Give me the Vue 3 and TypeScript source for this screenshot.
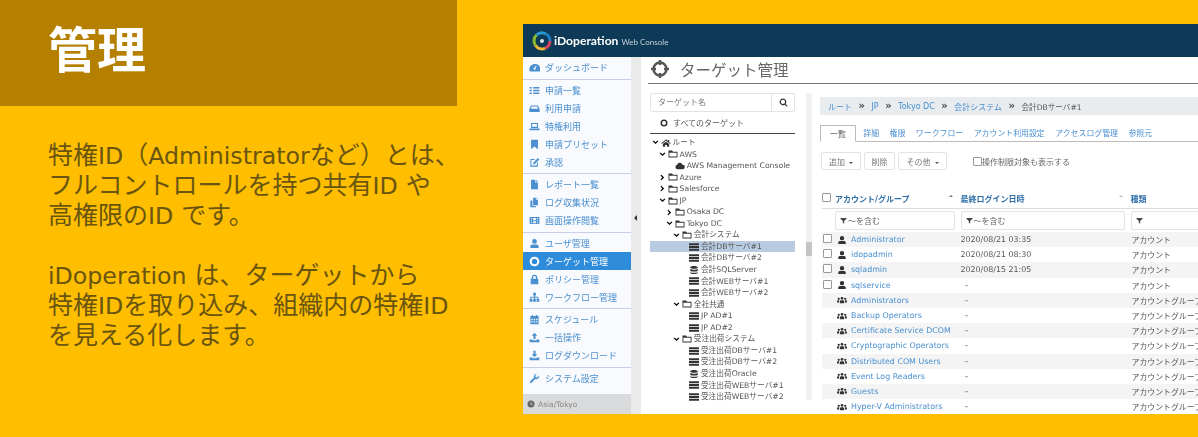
<script setup lang="ts">
const icons: Record<string, string> = {
  gauge: 'M8 3a7.500 7.500 0 0 0-7.500 7.500c0 1.300.3 2.400.8 3.200h14.400c.5-.8.8-1.900.8-3.200A7.500 7.500 0 0 0 8 3zm0 8.500a1.500 1.500 0 0 1-.6-2.900l2.600-3 .8.500-1.500 3.400A1.500 1.500 0 0 1 8 11.500z',
  list: 'M1 3h3v2H1zM6 3h9v2H6zM1 7h3v2H1zM6 7h9v2H6zM1 11h3v2H1zM6 11h9v2H6z',
  inbox: 'M3 3.500h10l2.500 5.500v4H.5V9zm1 1.500L2.800 8.500h10.400L12 5z',
  laptop: 'M3 3h10v7H3zm1.500 1.500v4h7v-4zM.5 11h15v1.500l-1 1h-13l-1-1z',
  bookmark: 'M3 1h10v14l-5-4-5 4z',
  edit: 'M2 3h7L7.500 4.500H3.500v8h8V9L13 7.500V14H2zM13 1.500l2 2L8.500 10 6 10.500 6.500 8z',
  file: 'M3 1h6v4h4v10H3zM10 1l3 3h-3zM5 7.500h6v1H5zM5 10h6v1H5z',
  copy: 'M6 1h4v3h3v8H6zM11 1l2 2h-2zM2 5h3v8h5v2H2z',
  film: 'M1 3h14v10H1zm2 1.500v1.500h1.500V4.500zm0 3V9h1.500V7.500zm0 3V12h1.500v-1.500zm8.500-6v1.500H13V4.500zm0 3V9H13V7.500zm0 3V12H13v-1.500zM6 4.500v3h4v-3zm0 4.500v3h4V9z',
  user: 'M8 1.500a3.500 3.500 0 1 1 0 7 3.500 3.500 0 0 1 0-7zM2 14.500v-2c0-2 1.500-3 3-3h6c1.500 0 3 1 3 3v2z',
  target: 'M8 1a7 7 0 1 1 0 14A7 7 0 0 1 8 1zm0 3a4 4 0 1 0 0 8 4 4 0 0 0 0-8z',
  lock: 'M4 7V5a4 4 0 0 1 8 0v2h1.500v8h-11V7zm2 0h4V5a2 2 0 0 0-4 0z',
  flow: 'M6 1h4v4H9v2h4.500v3h1.500v4h-4v-4h1V8.500H8.700V10H10v4H6v-4h1.300V8.500H3.500V10H5v4H1v-4h1V7h5.500V5H6z',
  calendar: 'M2 3h2V1.500h2V3h4V1.500h2V3h2v12H2zm1.500 4v2h2V7zm3.500 0v2h2V7zm3.500 0v2h2V7zM3.500 10.500v2h2v-2zm3.500 0v2h2v-2zm3.500 0v2h2v-2z',
  upload: 'M8 1l4 4.500H9.500V10h-3V5.500H4zM1 11h4v1h6v-1h4v4H1z',
  download: 'M6.500 1h3v5H12l-4 4.500L4 6h2.500zM1 11h4v1h6v-1h4v4H1z',
  wrench: 'M15 4.500a4.500 4.500 0 0 1-6 4.200L3.500 14.500a1.500 1.500 0 0 1-2-2l5.700-5.500A4.500 4.500 0 0 1 11.500 1L9 3.500 9.500 6l2.500.5L14.500 4z',
  clock: 'M8 1a7 7 0 1 1 0 14A7 7 0 0 1 8 1zM7.300 4v5l3.700 1.500.5-1.200-2.800-1.100V4z',
  home: 'M8 2l3 2.500V3h2v3.200L15.500 8.500l-.8.9L8 4 1.300 9.400l-.8-.9zM3 9.500L8 5.500l5 4V14H9.500v-3h-3v3H3z',
  folder: 'M.8 2.500h5.700l1.500 2h7.200v9H.8zM2.200 6v6h11.600V6z',
  server: 'M0 2h16v3.300H0zM0 6.400h16v3.300H0zM0 10.800h16v3.300H0z',
  db: 'M8 1.500c3.500 0 6 1 6 2.300S11.500 6 8 6 2 5.100 2 3.800 4.500 1.500 8 1.500zM2 6c1 1 3.500 1.500 6 1.500S13 7 14 6v3c-1 1-3.500 1.500-6 1.500S3 10 2 9zM2 11c1 1 3.500 1.500 6 1.500s5-.5 6-1.500v1.500c0 1.200-2.500 2-6 2s-6-.8-6-2z',
  cloud: 'M12.500 13H4a3.500 3.500 0 0 1-.6-6.900A4.500 4.500 0 0 1 12 6a3.500 3.500 0 0 1 .5 7z',
  search: 'M7 1a6 6 0 0 1 4.800 9.600l3.500 3.500-1.500 1.500-3.500-3.500A6 6 0 1 1 7 1zm0 2.200a3.800 3.800 0 1 0 0 7.600 3.800 3.800 0 0 0 0-7.600z',
  filter: 'M1 2h14v2L9.500 9v5.500h-3V9L1 4z',
  users: 'M8 3a2.300 2.300 0 1 1 0 4.600A2.300 2.300 0 0 1 8 3zM4.500 13v-2c0-1.500 1-2.500 2-2.500h3c1 0 2 1 2 2.500v2zM2.800 4.200a1.800 1.800 0 1 1 0 3.600 1.800 1.800 0 0 1 0-3.600zM13.200 4.200a1.800 1.800 0 1 1 0 3.600 1.800 1.800 0 0 1 0-3.600zM0 12v-1.800C0 9 .8 8.300 1.800 8.300h2C3.200 9 3.300 10 3.300 12zM16 12v-1.800c0-1.200-.8-1.900-1.800-1.900h-2c.6.700.5 1.700.5 3.700z',
  chevronDown: 'M1.500 5.200l2-2L8 7.700l4.500-4.500 2 2L8 11.700z',
  chevronRight: 'M5.200 1.500l6.500 6.500-6.500 6.500-2-2L7.700 8 3.200 3.500z',
}

type NavItem = { label: string; icon: string; active?: boolean }

const navGroups: NavItem[][] = [
  [{ label: 'ダッシュボード', icon: 'gauge' }],
  [
    { label: '申請一覧', icon: 'list' },
    { label: '利用申請', icon: 'inbox' },
    { label: '特権利用', icon: 'laptop' },
    { label: '申請プリセット', icon: 'bookmark' },
    { label: '承認', icon: 'edit' },
  ],
  [
    { label: 'レポート一覧', icon: 'file' },
    { label: 'ログ収集状況', icon: 'copy' },
    { label: '画面操作閲覧', icon: 'film' },
  ],
  [
    { label: 'ユーザ管理', icon: 'user' },
    { label: 'ターゲット管理', icon: 'target', active: true },
    { label: 'ポリシー管理', icon: 'lock' },
    { label: 'ワークフロー管理', icon: 'flow' },
  ],
  [
    { label: 'スケジュール', icon: 'calendar' },
    { label: '一括操作', icon: 'upload' },
    { label: 'ログダウンロード', icon: 'download' },
  ],
  [{ label: 'システム設定', icon: 'wrench' }],
]

type TreeNode = { label: string; level: number; icon: string; toggle?: 'open' | 'closed'; selected?: boolean }

const tree: TreeNode[] = [
  { label: 'ルート', level: 0, icon: 'home', toggle: 'open' },
  { label: 'AWS', level: 1, icon: 'folder', toggle: 'open' },
  { label: 'AWS Management Console', level: 2, icon: 'cloud' },
  { label: 'Azure', level: 1, icon: 'folder', toggle: 'closed' },
  { label: 'Salesforce', level: 1, icon: 'folder', toggle: 'closed' },
  { label: 'JP', level: 1, icon: 'folder', toggle: 'open' },
  { label: 'Osaka DC', level: 2, icon: 'folder', toggle: 'closed' },
  { label: 'Tokyo DC', level: 2, icon: 'folder', toggle: 'open' },
  { label: '会計システム', level: 3, icon: 'folder', toggle: 'open' },
  { label: '会計DBサーバ#1', level: 4, icon: 'server', selected: true },
  { label: '会計DBサーバ#2', level: 4, icon: 'server' },
  { label: '会計SQLServer', level: 4, icon: 'db' },
  { label: '会計WEBサーバ#1', level: 4, icon: 'server' },
  { label: '会計WEBサーバ#2', level: 4, icon: 'server' },
  { label: '全社共通', level: 3, icon: 'folder', toggle: 'open' },
  { label: 'JP AD#1', level: 4, icon: 'server' },
  { label: 'JP AD#2', level: 4, icon: 'server' },
  { label: '受注出荷システム', level: 3, icon: 'folder', toggle: 'open' },
  { label: '受注出荷DBサーバ#1', level: 4, icon: 'server' },
  { label: '受注出荷DBサーバ#2', level: 4, icon: 'server' },
  { label: '受注出荷Oracle', level: 4, icon: 'db' },
  { label: '受注出荷WEBサーバ#1', level: 4, icon: 'server' },
  { label: '受注出荷WEBサーバ#2', level: 4, icon: 'server' },
]

const crumbs = ['ルート', 'JP', 'Tokyo DC', '会計システム']
const tabs = ['詳細', '権限', 'ワークフロー', 'アカウント利用設定', 'アクセスログ管理', '参照元']

type Account = { name: string; login: string; kind: string; group?: boolean }

const accounts: Account[] = [
  { name: 'Administrator', login: '2020/08/21 03:35', kind: 'アカウント' },
  { name: 'idopadmin', login: '2020/08/21 08:30', kind: 'アカウント' },
  { name: 'sqladmin', login: '2020/08/15 21:05', kind: 'アカウント' },
  { name: 'sqlservice', login: '–', kind: 'アカウント' },
  { name: 'Administrators', login: '–', kind: 'アカウントグループ', group: true },
  { name: 'Backup Operators', login: '–', kind: 'アカウントグループ', group: true },
  { name: 'Certificate Service DCOM', login: '–', kind: 'アカウントグループ', group: true },
  { name: 'Cryptographic Operators', login: '–', kind: 'アカウントグループ', group: true },
  { name: 'Distributed COM Users', login: '–', kind: 'アカウントグループ', group: true },
  { name: 'Event Log Readers', login: '–', kind: 'アカウントグループ', group: true },
  { name: 'Guests', login: '–', kind: 'アカウントグループ', group: true },
  { name: 'Hyper-V Administrators', login: '–', kind: 'アカウントグループ', group: true },
]
</script>

<template>
  <div class="page">
    <section class="copy">
      <h1 class="title">管理</h1>
      <div class="body">
        <p>特権<span class="latin">ID</span>（<span class="latin">Administrator</span>など）とは、<br />フルコントロールを持つ共有<span class="latin">ID</span> や<br />高権限の<span class="latin">ID</span> です。</p>
        <p><span class="latin">iDoperation</span> は、ターゲットから<br />特権<span class="latin">ID</span>を取り込み、組織内の特権<span class="latin">ID</span><br />を見える化します。</p>
      </div>
    </section>

    <section class="shot">
      <header class="navbar">
        <svg class="logo" viewBox="0 0 20 20">
          <path d="M3.500 14.500A8 8 0 0 1 4.500 4" fill="none" stroke="#8dbb2f" stroke-width="3" />
          <path d="M4.500 4A8 8 0 0 1 14 3" fill="none" stroke="#2a9ad5" stroke-width="3" />
          <path d="M14 3A8 8 0 0 1 18 10" fill="none" stroke="#1c7fbf" stroke-width="3" />
          <path d="M18 10A8 8 0 0 1 13 17.400" fill="none" stroke="#d7405f" stroke-width="3" />
          <path d="M13 17.400A8 8 0 0 1 3.500 14.500" fill="none" stroke="#f2b830" stroke-width="3" />
          <circle cx="10" cy="10" r="2" fill="#dfe6ea" />
        </svg>
        <span class="brand">iDoperation</span>
        <span class="brand-sub">Web Console</span>
      </header>

      <div class="workspace">
        <aside class="sidebar">
          <div class="nav">
            <div v-for="(group, i) in navGroups" :key="i" class="nav-group">
              <div v-for="item in group" :key="item.label" class="nav-item" :class="{ active: item.active }">
                <svg class="nav-icon" viewBox="0 0 16 16"><path :d="icons[item.icon]" /></svg>
                <span>{{ item.label }}</span>
              </div>
            </div>
          </div>
          <div class="zone">
            <svg class="zone-icon" viewBox="0 0 16 16"><path :d="icons.clock" /></svg>
            <span>Asia/Tokyo</span>
          </div>
        </aside>

        <div class="gutter"><span class="gutter-arrow"></span></div>

        <main class="content">
          <div class="page-title">
            <svg class="title-icon" viewBox="0 0 20 20">
              <circle cx="10" cy="10" r="6.500" fill="none" stroke="#555" stroke-width="2.400" />
              <path d="M10 1v5M10 14v5M1 10h5M14 10h5" stroke="#555" stroke-width="2.400" />
            </svg>
            <span>ターゲット管理</span>
          </div>

          <div class="panes">
            <div class="tree-pane">
              <div class="search">
                <span class="search-text">ターゲット名</span>
                <span class="search-btn">
                  <svg viewBox="0 0 16 16"><path :d="icons.search" /></svg>
                </span>
              </div>
              <div class="all-targets">
                <svg class="all-icon" viewBox="0 0 16 16"><path :d="icons.target" /></svg>
                <span>すべてのターゲット</span>
              </div>
              <div class="tree">
                <div
                  v-for="node in tree"
                  :key="node.label"
                  class="tree-row"
                  :class="{ selected: node.selected }"
                  :style="{ paddingLeft: `${2 + node.level * 7.1}px` }"
                >
                  <svg v-if="node.toggle" class="toggle" viewBox="0 0 16 16">
                    <path :d="node.toggle === 'open' ? icons.chevronDown : icons.chevronRight" />
                  </svg>
                  <span v-else class="toggle"></span>
                  <svg class="tree-icon" viewBox="0 0 16 16"><path :d="icons[node.icon]" /></svg>
                  <span>{{ node.label }}</span>
                </div>
              </div>
            </div>

            <div class="scroll-track"><span class="scroll-thumb"></span></div>

            <div class="detail">
              <nav class="crumbs">
                <template v-for="c in crumbs" :key="c">
                  <a>{{ c }}</a>
                  <b>»</b>
                </template>
                <span class="crumb-current">会計DBサーバ#1</span>
              </nav>

              <div class="tabs">
                <span class="tab current">一覧</span>
                <a v-for="t in tabs" :key="t" class="tab">{{ t }}</a>
              </div>

              <div class="toolbar">
                <button class="btn add">追加<i class="caret"></i></button>
                <button class="btn del">削除</button>
                <button class="btn other">その他<i class="caret"></i></button>
                <label class="limit"><i class="check"></i>操作制限対象も表示する</label>
              </div>

              <div class="grid-row head">
                <span class="cell-check"><i class="check"></i></span>
                <span class="cell-name">アカウント/グループ<i class="sort up"></i></span>
                <span class="cell-login">最終ログイン日時<i class="sort both"></i></span>
                <span class="cell-kind">種類</span>
              </div>
              <div class="grid-row filters">
                <span class="cell-check"></span>
                <span class="field cell-name"><svg viewBox="0 0 16 16"><path :d="icons.filter" /></svg>～を含む</span>
                <span class="field cell-login"><svg viewBox="0 0 16 16"><path :d="icons.filter" /></svg>～を含む</span>
                <span class="field cell-kind"><svg viewBox="0 0 16 16"><path :d="icons.filter" /></svg></span>
              </div>
              <div v-for="a in accounts" :key="a.name" class="grid-row account">
                <span class="cell-check"><i v-if="!a.group" class="check"></i></span>
                <span class="cell-name">
                  <svg class="acct-icon" viewBox="0 0 16 16"><path :d="a.group ? icons.users : icons.user" /></svg>
                  <a>{{ a.name }}</a>
                </span>
                <span class="cell-login" :class="{ dash: a.login === '–' }">{{ a.login }}</span>
                <span class="cell-kind">{{ a.kind }}</span>
              </div>
            </div>
          </div>
        </main>
      </div>
    </section>
  </div>
</template>

<style scoped>
.page {
  width: 1198px;
  height: 437px;
  background: #ffbe00;
  display: flex;
  overflow: hidden;
  font-family: "DejaVu Sans", "Noto Sans CJK JP", sans-serif;
}

/* left copy */
.copy {
  width: 457px;
  flex: none;
}
.title {
  margin: 0;
  height: 106px;
  box-sizing: border-box;
  padding: 22px 0 0 48px;
  background: #b57f00;
  color: #fff;
  font-size: 49px;
  line-height: 60px;
  font-weight: 700;
}
.body {
  padding: 35px 0 0 48px;
  color: #6a5510;
  font-size: 25px;
  line-height: 30px;
}
.body p {
  margin: 0 0 30px;
  white-space: nowrap;
}
.latin {
  font-size: 23.700px;
}

/* screenshot */
.shot {
  margin: 24px 0 0 66px;
  flex: 1;
  min-width: 0;
  height: 390px;
  background: #fff;
  overflow: hidden;
  filter: blur(0.45px);
}
.navbar {
  height: 33px;
  background: #0d3a56;
  display: flex;
  align-items: center;
  padding-left: 9px;
  color: #fff;
}
.logo {
  width: 20px;
  height: 20px;
  margin-right: 2px;
}
.brand {
  font-family: "Lato", sans-serif;
  font-weight: 700;
  font-size: 12.100px;
}
.brand-sub {
  font-family: "Lato", sans-serif;
  font-size: 8px;
  margin-left: 3px;
  margin-top: 2px;
  color: #c6d3dc;
}
.workspace {
  display: flex;
  height: 357px;
  font-size: 8px;
  color: #555;
}

/* sidebar */
.sidebar {
  width: 108px;
  flex: none;
  display: flex;
  flex-direction: column;
  background: #f8fafd;
}
.nav {
  flex: 1;
}
.nav-group {
  border-bottom: 1px solid #c9cde6;
  padding: 1.750px 0;
}
.nav-group:last-child {
  border-bottom: 0;
}
.nav-item {
  height: 18px;
  display: flex;
  align-items: center;
  padding-left: 6px;
  color: #4a90d0;
  font-size: 9px;
}
.nav-item.active {
  background: #2f8cdb;
  color: #fff;
}
.nav-icon {
  width: 11px;
  height: 11px;
  margin-right: 5px;
  fill: currentColor;
}
.zone {
  height: 20px;
  background: #d9dadb;
  display: flex;
  align-items: center;
  padding-left: 4px;
  color: #888;
  font-size: 7.500px;
}
.zone-icon {
  width: 8px;
  height: 8px;
  margin-right: 3px;
  fill: #666;
}
.gutter {
  width: 10px;
  flex: none;
  background: #eaeaea;
}
.gutter-arrow {
  display: block;
  width: 0;
  margin: 158px 0 0 3px;
  border: 3px solid transparent;
  border-left-width: 0;
  border-right-color: #333;
}

/* main */
.content {
  flex: 1;
  min-width: 0;
  padding-left: 7px;
}
.page-title {
  height: 26px;
  display: flex;
  align-items: center;
  border-bottom: 1.500px solid #777;
  font-size: 15.500px;
  color: #666;
}
.page-title span {
  margin-top: -2px;
}
.title-icon {
  width: 20px;
  height: 20px;
  margin: -2px 10px 0 2px;
}
.panes {
  display: flex;
  padding-top: 9px;
  height: 322px;
}

/* tree */
.tree-pane {
  width: 145px;
  flex: none;
  margin-left: 2px;
}
.search {
  height: 19px;
  display: flex;
  border: 1px solid #e3e3e3;
  border-radius: 2px;
  box-sizing: border-box;
}
.search-text {
  flex: 1;
  padding-left: 7px;
  line-height: 17px;
  color: #777;
}
.search-btn {
  width: 22px;
  border-left: 1px solid #e3e3e3;
  display: flex;
  align-items: center;
  justify-content: center;
}
.search-btn svg {
  width: 9px;
  height: 9px;
  fill: #333;
}
.all-targets {
  height: 21px;
  display: flex;
  align-items: center;
  padding-left: 10px;
  border-bottom: 1.500px solid #444;
}
.all-icon {
  width: 8px;
  height: 8px;
  margin-right: 5px;
  fill: #333;
}
.tree {
  padding-top: 3px;
}
.tree-row {
  height: 11.550px;
  display: flex;
  align-items: center;
  white-space: nowrap;
  line-height: 11.500px;
  font-size: 7.700px;
}
.tree-row.selected {
  background: #b8cbe0;
}
.toggle {
  width: 7px;
  height: 7px;
  margin-right: 1.500px;
  flex: none;
}
.tree-icon {
  width: 10px;
  height: 10px;
  margin-right: 2px;
  flex: none;
  fill: #333;
}
.scroll-track {
  width: 6px;
  flex: none;
  margin-left: 11px;
  height: 307px;
  background: #f1f1f1;
}
.scroll-thumb {
  display: block;
  width: 6px;
  height: 14px;
  margin-top: 149px;
  background: #c4c4c4;
}

/* detail */
.detail {
  flex: 1;
  min-width: 0;
  padding: 0 0 0 8px;
  overflow: hidden;
}
a {
  color: #4a90d0;
}
.crumbs {
  height: 18px;
  background: #e9ecef;
  margin-top: 4px;
  display: flex;
  align-items: center;
  gap: 6.500px;
  padding-left: 8px;
  white-space: nowrap;
}
.crumbs b {
  font-weight: 700;
  font-size: 10px;
  line-height: 10px;
  color: #444;
}
.crumb-current {
  font-size: 7.600px;
}
.tabs {
  margin-top: 10px;
  height: 16px;
  display: flex;
  border-bottom: 1px solid #bbb;
  white-space: nowrap;
  align-items: flex-end;
  font-size: 7.900px;
}
.tab {
  padding: 0 5.250px;
  line-height: 15px;
}
.tab.current {
  width: 36px;
  box-sizing: border-box;
  padding: 0;
  text-align: center;
  height: 17px;
  line-height: 17px;
  margin-bottom: -1px;
  border: 1px solid #bbb;
  border-bottom-color: #fff;
  margin-right: 2px;
}
.toolbar {
  margin-top: 10px;
  height: 18px;
  display: flex;
  gap: 3px;
  align-items: center;
}
.btn {
  height: 18px;
  padding: 0;
  border: 1px solid #e3e3e3;
  border-radius: 2px;
  background: #fff;
  font: inherit;
  color: #777;
}
.btn.add { width: 40px; margin-left: 1px; }
.btn.del { width: 31px; }
.btn.other { width: 49px; }
.caret {
  display: inline-block;
  margin-left: 4px;
  vertical-align: 1px;
  border: 2px solid transparent;
  border-bottom-width: 0;
  border-top-color: #555;
}
.limit {
  margin-left: 23px;
  display: flex;
  align-items: center;
  color: #666;
}
.check {
  display: inline-block;
  width: 7px;
  height: 7px;
  border: 1px solid #999;
  border-radius: 1px;
  background: #fff;
}
.grid-row {
  display: grid;
  grid-template-columns: 13px 125.500px 170px 80px;
  align-items: center;
  white-space: nowrap;
  margin-left: 2px;
}
.head {
  margin-top: 19px;
  height: 20px;
  font-weight: 700;
  color: #2d6ea8;
  border-bottom: 1px solid #ddd;
  box-sizing: border-box;
}
.head .cell-name,
.head .cell-login {
  display: flex;
  justify-content: space-between;
  padding-right: 8px;
}
.sort {
  width: 0;
  height: 0;
  margin-top: 2px;
  border: 2px solid transparent;
  border-top-width: 0;
  border-bottom-color: #777;
}
.sort.both {
  border-bottom-color: #bbb;
}
.filters {
  height: 23px;
}
.field {
  height: 19px;
  margin-right: 6px;
  border: 1px solid #e3e3e3;
  border-radius: 2px;
  display: flex;
  align-items: center;
  padding-left: 4px;
  color: #666;
  box-sizing: border-box;
}
.field svg {
  width: 7px;
  height: 7px;
  margin-right: 1px;
  fill: #444;
}
.account {
  height: 15.200px;
  font-size: 7.900px;
}
.account:nth-child(even) {
  background: #f4f4f4;
}
.account .cell-name {
  display: flex;
  align-items: center;
  padding-left: 2px;
}
.account .cell-check {
  padding-left: 1px;
}
.acct-icon {
  width: 10px;
  height: 10px;
  margin-right: 4px;
  fill: #333;
}
.account .cell-kind {
  padding-left: 1px;
}
.cell-login.dash {
  padding-left: 4px;
}
</style>

<style>
body {
  margin: 0;
}
</style>
